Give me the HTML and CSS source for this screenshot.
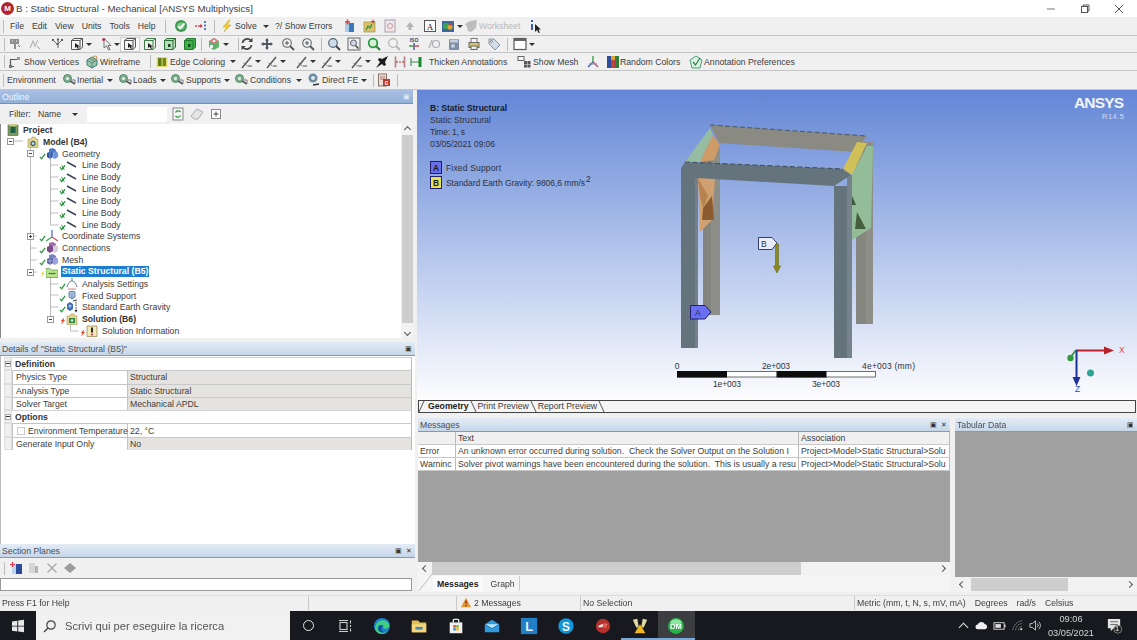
FILE: index.html
```html
<!DOCTYPE html>
<html lang="en">
<head>
<meta charset="utf-8">
<title>B : Static Structural - Mechanical [ANSYS Multiphysics]</title>
<link rel="stylesheet" href="styles.css">
</head>
<body>
<svg class="sprite" xmlns="http://www.w3.org/2000/svg">
  <symbol id="ok" viewBox="0 0 14 14"><circle cx="7" cy="7" r="6" fill="#3f9a52"/><circle cx="7" cy="7" r="3.6" fill="#7fc78b"/><path d="M4 7l2.2 2.4L10.5 4.4" fill="none" stroke="#fff" stroke-width="1.8"/></symbol>
  <symbol id="flow" viewBox="0 0 14 14"><path d="M1 7h7" stroke="#d2475a" stroke-width="1.4" stroke-dasharray="2 1"/><path d="M6 5l3 2-3 2z" fill="#d2475a"/><path d="M11 2v10" stroke="#3a62b8" stroke-width="1.6" stroke-dasharray="2 1.5"/></symbol>
  <symbol id="bolt" viewBox="0 0 14 14"><path d="M9 1L3 8h3.500L4 13l7-7H7.500L10 1z" fill="#f2cd2c" stroke="#c79f1e" stroke-width=".5"/></symbol>
  <symbol id="newbox" viewBox="0 0 14 14"><rect x="2" y="4" width="9" height="9" fill="#3d78b8"/><rect x="2" y="4" width="4" height="9" fill="#a7cce8"/><path d="M2 3h5M4.500 .5v5" stroke="#d8394a" stroke-width="1.400"/></symbol>
  <symbol id="chart" viewBox="0 0 14 14"><rect x="1" y="3" width="11" height="10" fill="#d6c36a" stroke="#96863a" stroke-width=".6"/><path d="M3 11l2-4 2 2 2-4" stroke="#3d8a46" stroke-width="1.300" fill="none"/><path d="M10 0.500v4M8 2.500h4" stroke="#d8394a" stroke-width="1"/></symbol>
  <symbol id="rep" viewBox="0 0 14 14"><rect x="2" y="1" width="10" height="12" fill="#f1e6ea" stroke="#a8a0b0"/><circle cx="7" cy="7" r="2.500" fill="none" stroke="#c797a8"/></symbol>
  <symbol id="spade" viewBox="0 0 14 14"><path d="M7 3l4 5H8.500v3h-3V8H3z" fill="#b4b4b4"/></symbol>
  <symbol id="abox" viewBox="0 0 14 14"><rect x="1.500" y="1.500" width="11" height="11" fill="#fafafa" stroke="#555"/><text x="7" y="10.500" text-anchor="middle" font-family="Liberation Serif" font-size="9" fill="#222">A</text></symbol>
  <symbol id="colorbox" viewBox="0 0 14 14"><rect x="1" y="2" width="12" height="11" fill="#3a6a9e"/><circle cx="5" cy="7" r="3" fill="#3da64e"/><circle cx="9" cy="8" r="2.500" fill="#e2a52f"/><circle cx="9" cy="5" r="1.500" fill="#c8413f"/></symbol>
  <symbol id="blob" viewBox="0 0 14 14"><path d="M1 5l5-3 7-1-1 8-5 4-3-1-1-4z" fill="#bdbdbd"/></symbol>
  <symbol id="infoc" viewBox="0 0 14 14"><path d="M3 1v2M3 5v6" stroke="#2a4fa8" stroke-width="1.800"/><path d="M6 5l0 8 2-2 1.500 3 1.300-.6L9.500 10.500H12z" fill="#222"/></symbol>
  <symbol id="face" viewBox="0 0 14 14"><path d="M2 2h9v5H8v5H6V7H2z" fill="#8d8d8d"/><path d="M4 4h1M8 4h1" stroke="#fff"/><path d="M10 8l2 2" stroke="#c8394a"/></symbol>
  <symbol id="sel2" viewBox="0 0 14 14"><path d="M2 11l3-7 2 5 3-6" stroke="#b5b5b5" stroke-width="1.200" fill="none"/><path d="M9 9l3 3" stroke="#c98a92"/></symbol>
  <symbol id="sel3" viewBox="0 0 14 14"><g fill="#555"><rect x="2" y="2" width="2" height="2"/><rect x="7" y="1.500" width="2" height="2"/><rect x="11" y="2" width="2" height="2"/><rect x="6.500" y="6" width="2" height="2"/></g><path d="M3 3l4 4M8 3v8M12 3L8 7" stroke="#666"/></symbol>
  <symbol id="cube0" viewBox="0 0 14 14"><path d="M1.500 3.500L4 1.500h8.500V10L10 12.500H1.500z" fill="#f4f4f4" stroke="#555"/><path d="M1.500 3.500H10v9M10 3.500l2.500-2" fill="none" stroke="#555"/><path d="M5 6l0 5 1.500-1.300L8 12l1-.5-1-2h2z" fill="#222"/></symbol>
  <symbol id="cube1" viewBox="0 0 14 14"><path d="M1.500 3.500L4 1.500h8.500V10L10 12.500H1.500z" fill="#eaf3ea" stroke="#3f7a48"/><path d="M1.500 3.500H10v9M10 3.500l2.500-2" fill="none" stroke="#3f7a48"/><path d="M5 6l0 5 1.500-1.300L8 12l1-.5-1-2h2z" fill="#222"/></symbol>
  <symbol id="cube2" viewBox="0 0 14 14"><path d="M1.500 3.500L4 1.500h8.500V10L10 12.500H1.500z" fill="#b9dcb9" stroke="#2c6e36"/><path d="M1.500 3.500H10v9M10 3.500l2.500-2" fill="none" stroke="#2c6e36"/><rect x="5" y="7" width="2.500" height="3" fill="#1b4822"/></symbol>
  <symbol id="cube3" viewBox="0 0 14 14"><path d="M1.500 3.500L4 1.500h8.500V10L10 12.500H1.500z" fill="#3fb24c" stroke="#1f7a2c"/><path d="M1.500 3.500H10v9" fill="none" stroke="#1f7a2c"/><rect x="5" y="7" width="2.500" height="3" fill="#12501c"/></symbol>
  <symbol id="cur" viewBox="0 0 14 14"><path d="M4 1l0 10 2.500-2.200L8.500 13l1.500-.7L8 8.500h3z" fill="#eee" stroke="#555" stroke-width=".8"/><circle cx="3.500" cy="2.500" r="1.500" fill="#c8394a"/></symbol>
  <symbol id="multi" viewBox="0 0 14 14"><path d="M7 1l5 3v6l-5 3-5-3V4z" fill="#5fb068"/><path d="M7 1l5 3-5 3-5-3z" fill="#e28a8a"/><circle cx="7" cy="4" r="2" fill="#f3f3f3" stroke="#c8394a" stroke-width=".7"/><rect x="3" y="8" width="3" height="3" fill="#eee"/></symbol>
  <symbol id="rot" viewBox="0 0 14 14"><path d="M11 3.500C8 .5 3 2 2.500 6M3 10.500C6 13.500 11 12 11.500 8" fill="none" stroke="#444" stroke-width="1.700"/><path d="M12.500 .8v4.200H8.300zM1.500 13.200V9h4.200z" fill="#444"/></symbol>
  <symbol id="pan" viewBox="0 0 14 14"><path d="M7 1l2 2.500H8V6h2.500V5L13 7l-2.500 2V8H8v2.500h1L7 13l-2-2.500h1V8H3.500v1L1 7l2.500-2v1H6V3.500H5z" fill="#556"/></symbol>
  <symbol id="zp" viewBox="0 0 14 14"><circle cx="6" cy="6" r="4.300" fill="#eef1f4" stroke="#666" stroke-width="1.100"/><path d="M9 9l4 4" stroke="#555" stroke-width="1.800"/><path d="M4 6h4M6 4v4" stroke="#555"/></symbol>
  <symbol id="zb" viewBox="0 0 14 14"><circle cx="6" cy="6" r="4.300" fill="#cbdbe8" stroke="#55687a" stroke-width="1.200"/><path d="M9 9l4 4" stroke="#444" stroke-width="2"/></symbol>
  <symbol id="zbox" viewBox="0 0 14 14"><rect x="1" y="1" width="12" height="12" fill="#eee" stroke="#666"/><circle cx="6.500" cy="6" r="3" fill="#cdd8e0" stroke="#667"/><path d="M8.500 8.500l3 3" stroke="#444" stroke-width="1.500"/></symbol>
  <symbol id="zg" viewBox="0 0 14 14"><circle cx="6" cy="6" r="4.300" fill="#d7efd6" stroke="#2c9a3e" stroke-width="1.800"/><path d="M9 9l4 4" stroke="#2a8a38" stroke-width="2.200"/></symbol>
  <symbol id="zgr" viewBox="0 0 14 14"><circle cx="6" cy="6" r="4.300" fill="#f2f2f2" stroke="#b4b4b4" stroke-width="1.200"/><path d="M9 9l4 4" stroke="#b4b4b4" stroke-width="1.800"/></symbol>
  <symbol id="iso" viewBox="0 0 14 14"><text x="7" y="5" text-anchor="middle" font-family="Liberation Sans" font-size="5" font-weight="700" fill="#445">ISO</text><path d="M7 6v7" stroke="#3a62b8" stroke-width="1.500"/><path d="M2 9h5" stroke="#3fa050" stroke-width="1.500"/><path d="M7 9h5" stroke="#d2475a" stroke-width="1.500"/></symbol>
  <symbol id="hist" viewBox="0 0 14 14"><path d="M2 11l3-8" stroke="#b8b8b8" stroke-width="1.500"/><circle cx="9" cy="7" r="3.500" fill="none" stroke="#aab" stroke-width="1.200"/></symbol>
  <symbol id="drive" viewBox="0 0 14 14"><rect x="2" y="2" width="10" height="11" rx="1" fill="#7e8ea6"/><rect x="3" y="2.500" width="8" height="3" fill="#c8d0dc"/><circle cx="6" cy="9" r="2" fill="#c3ccd8"/></symbol>
  <symbol id="prn" viewBox="0 0 14 14"><rect x="4" y="1.500" width="6" height="4" fill="#f8f8f8" stroke="#777"/><rect x="2" y="5.500" width="10" height="5" fill="#d8c468" stroke="#666"/><rect x="4" y="9" width="6" height="3.500" fill="#eee" stroke="#666"/></symbol>
  <symbol id="tag" viewBox="0 0 14 14"><path d="M2 2h5l6 6-5 5-6-6z" fill="#cfdce8" stroke="#8595a8"/><circle cx="4.500" cy="4.500" r="1" fill="#fff" stroke="#778"/></symbol>
  <symbol id="win" viewBox="0 0 14 14"><rect x="1" y="1.500" width="12" height="11" fill="#fff" stroke="#555" stroke-width="1.200"/><rect x="1" y="1.500" width="12" height="2.500" fill="#666"/></symbol>
  <symbol id="vert" viewBox="0 0 14 14"><path d="M2.500 11.500V4.500h7M2.500 11.500H6" fill="none" stroke="#555" stroke-width="1.200"/><rect x="9" y="2" width="3" height="3" fill="#999"/><rect x="1" y="10" width="3" height="3" fill="#777"/></symbol>
  <symbol id="wire" viewBox="0 0 14 14"><path d="M2 5l5-3 5 3v5l-5 3-5-3z" fill="#9ac8a0" stroke="#3b7a7e"/><path d="M2 5l5 3 5-3M7 8v5M4.500 3.500l5 3" fill="none" stroke="#3b6e8e" stroke-width=".7"/><circle cx="10" cy="3" r="2" fill="none" stroke="#c08b3c"/></symbol>
  <symbol id="edge" viewBox="0 0 14 14"><rect x="1.500" y="2" width="11" height="10" fill="#e6dd72"/><rect x="3" y="3" width="3.500" height="8" fill="#5f7a12"/><rect x="7.500" y="3" width="3.500" height="8" fill="#6f8a1c"/></symbol>
  <symbol id="beam" viewBox="0 0 14 14"><path d="M2 13L11 2" stroke="#555" stroke-width="1.400"/><path d="M3.500 8l4 3" stroke="#777"/><path d="M8 11h4" stroke="#888" stroke-width="1.500"/></symbol>
  <symbol id="pin" viewBox="0 0 14 14"><path d="M13 1L7 4 4 3 3 5l2 2-4 6 6-4 2 2 2-1-1-3z" fill="#1c1c1c"/></symbol>
  <symbol id="hr" viewBox="0 0 14 14"><path d="M2.500 1.500v11M11.500 1.500v11" stroke="#b87a88" stroke-width="1.600"/><path d="M3 7h8" stroke="#a33" stroke-dasharray="2 1"/></symbol>
  <symbol id="hg" viewBox="0 0 14 14"><path d="M2 3v8" stroke="#4d8a56" stroke-width="1.200"/><path d="M11 2v10" stroke="#188a2c" stroke-width="3"/><path d="M2 7h8" stroke="#3c8a4a"/></symbol>
  <symbol id="mesh" viewBox="0 0 14 14"><rect x="1" y="1.500" width="6" height="4" fill="#f5f5f5" stroke="#666"/><g fill="#555"><rect x="7" y="6" width="3" height="3"/><rect x="10.500" y="6" width="3" height="3"/><rect x="7" y="9.500" width="3" height="3"/><rect x="10.500" y="9.500" width="3" height="3"/></g></symbol>
  <symbol id="axes" viewBox="0 0 14 14"><path d="M7 7V1" stroke="#3aa04e" stroke-width="1.400"/><path d="M7 7l-5 5" stroke="#3a62b8" stroke-width="1.400"/><path d="M7 7l5 5" stroke="#d2475a" stroke-width="1.400"/><path d="M3 9h8" stroke="#7a8ab0"/></symbol>
  <symbol id="rand" viewBox="0 0 14 14"><rect x="1" y="1" width="4" height="12" fill="#2e4c9c"/><rect x="5" y="5" width="4" height="8" fill="#c04242"/><rect x="9" y="1" width="4" height="12" fill="#2e7e3c"/><rect x="5" y="1" width="4" height="4" fill="#d6a82e"/></symbol>
  <symbol id="annot" viewBox="0 0 14 14"><path d="M7 1l6 4-2 8H3L1 5z" fill="#dff0e4" stroke="#4b9a78"/><path d="M4 7l2.500 3L11 3" fill="none" stroke="#2d8a4c" stroke-width="1.300"/></symbol>
  <symbol id="load" viewBox="0 0 14 14"><circle cx="5.500" cy="5.500" r="4" fill="#7fae8f" stroke="#4a8a64"/><circle cx="5.500" cy="5.500" r="1.500" fill="#e8f2ea"/><path d="M8 8l5 3" stroke="#555" stroke-width="1.500"/><path d="M10 7h3v3" fill="none" stroke="#777"/></symbol>
  <symbol id="fe" viewBox="0 0 14 14"><circle cx="6" cy="5" r="4.500" fill="#6d8ca0"/><circle cx="6" cy="5" r="2" fill="#dfe8ee"/><path d="M6 12l6-1" stroke="#333" stroke-width="1.500"/></symbol>
  <symbol id="ctext" viewBox="0 0 14 14"><rect x="1.500" y="1" width="8" height="12" fill="#e9dfd8" stroke="#876"/><path d="M3 4h5M3 6h5" stroke="#b3726a"/><rect x="6" y="6" width="7" height="7" fill="#c4342c"/><text x="9.500" y="12" text-anchor="middle" font-family="Liberation Sans" font-size="6.500" font-weight="700" fill="#fff">c</text></symbol>
  <symbol id="refresh" viewBox="0 0 14 14"><rect x="2" y="1" width="10" height="12" fill="#f4f4f4" stroke="#888"/><path d="M9.500 5A3 3 0 0 0 4.500 5.500M4.500 9a3 3 0 0 0 5-.5" fill="none" stroke="#2f9a44" stroke-width="1.300"/></symbol>
  <symbol id="eraser" viewBox="0 0 14 14"><path d="M1 9l6-7 6 3-5 7H4z" fill="#e5e5e5" stroke="#aaa"/></symbol>
  <symbol id="plusb" viewBox="0 0 14 14"><rect x="2.500" y="2.500" width="9" height="9" fill="#fff" stroke="#888"/><path d="M4.500 7h5M7 4.500v5" stroke="#444"/></symbol>
  <symbol id="proj" viewBox="0 0 12 12"><rect x="1" y="1" width="10" height="10.500" fill="#7e9a5c" stroke="#525f3a" stroke-width=".6"/><rect x="3.500" y="3" width="5" height="6" fill="#1f5e46"/><rect x="2" y="0" width="8" height="2" fill="#cfc68a"/></symbol>
  <symbol id="model" viewBox="0 0 12 12"><path d="M1 3h3l1-2h3l1 2h2v8.500H1z" fill="#e4d48e" stroke="#9a8a4a" stroke-width=".5"/><path d="M3.500 6l2.500-1.500L8.500 6v3L6 10.500 3.500 9z" fill="#34657a"/><circle cx="6" cy="7.500" r="1.300" fill="#d2e4e8"/></symbol>
  <symbol id="geo" viewBox="0 0 12 12"><path d="M3 1l4-1 3 2v3L7 7 3 5z" fill="#4e78c4"/><path d="M1 5l3-1.500L7 5v4L4 11 1 9z" fill="#2e58a8"/><path d="M7 4l3-1 2 2v4l-3 2-2-1z" fill="#6e94d8"/><path d="M4 3.500V11M7 5v5" stroke="#c8d8f0" stroke-width=".5"/></symbol>
  <symbol id="conn" viewBox="0 0 12 12"><path d="M3 1l4-1 3 2v3L7 7 3 5z" fill="#9c6aa8"/><path d="M1 5l3-1.500L7 5v4L4 11 1 9z" fill="#7c4a88"/><path d="M7 4l3-1 2 2v4l-3 2-2-1z" fill="#d8cdd8"/></symbol>
  <symbol id="meshi" viewBox="0 0 12 12"><path d="M3 1l4-1 3 2v3L7 7 3 5z" fill="#7a82c0"/><path d="M1 5l3-1.500L7 5v4L4 11 1 9z" fill="#5a62a0"/><path d="M7 4l3-1 2 2v4l-3 2-2-1z" fill="#9aa2d8"/><path d="M4 3.500V11M1 7l6 0" stroke="#e0e4f8" stroke-width=".5"/></symbol>
  <symbol id="line" viewBox="0 0 12 12"><path d="M1 3l9 5" stroke="#3a4652" stroke-width="1.500"/></symbol>
  <symbol id="csi" viewBox="0 0 12 12"><path d="M6 7V0" stroke="#3a62b8" stroke-width="1.200"/><path d="M6 7l-6 4" stroke="#3aa04e" stroke-width="1.200"/><path d="M6 7l6 4" stroke="#d2475a" stroke-width="1.200"/></symbol>
  <symbol id="stat" viewBox="0 0 12 12"><path d="M0 2.500h4l1 1.500h7v7.500H0z" fill="#b6e38c" stroke="#5d9a46" stroke-width=".7"/><path d="M2.500 7.500h7" stroke="#3f7a2e" stroke-width="1.200"/></symbol>
  <symbol id="ana" viewBox="0 0 12 12"><path d="M1 9C3 1 9 1 11 9" fill="none" stroke="#3f5a72" stroke-width=".8"/><path d="M2 11h8" stroke="#c58a80"/><path d="M6 0v3" stroke="#48a" /></symbol>
  <symbol id="fix" viewBox="0 0 12 12"><path d="M3 2l3-1 3 1v5L6 9 3 7z" fill="#a8c8e0" stroke="#385a88" stroke-width=".7"/><path d="M6 3v6" stroke="#385a88" stroke-width=".5"/><path d="M7 11l4-1" stroke="#444" stroke-width="1.200"/></symbol>
  <symbol id="grv" viewBox="0 0 12 12"><path d="M1 3l3-2 3 2v5L4 10 1 8z" fill="#3e6eb8"/><circle cx="4" cy="5" r="1.500" fill="#a8c4e8"/><path d="M10 1v9" stroke="#333" stroke-dasharray="1.500 1"/><path d="M8.500 9h3L10 11.500z" fill="#222"/></symbol>
  <symbol id="sol" viewBox="0 0 12 12"><path d="M1 3h3l1-2h3l1 2h2v8.500H1z" fill="#e4d48e" stroke="#9a8a4a" stroke-width=".5"/><path d="M3 5h6v5H3z" fill="#2f8a44"/><circle cx="6" cy="7.500" r="1.300" fill="#d2e8d8"/></symbol>
  <symbol id="inf" viewBox="0 0 12 12"><path d="M1 1h10v10.500H1z" fill="#f4e9b6" stroke="#8a7a4a" stroke-width=".7"/><path d="M6 2.500v5" stroke="#111" stroke-width="1.800"/><circle cx="6" cy="9.500" r="1" fill="#c23"/></symbol>
  <symbol id="ck" viewBox="0 0 8 8"><path d="M1 5l2 2 4-5.500" fill="none" stroke="#2f9a44" stroke-width="1.500"/></symbol>
  <symbol id="ck2" viewBox="0 0 8 8"><path d="M1 4l2 3 4-5" fill="none" stroke="#2f9a44" stroke-width="1.400"/><path d="M3 2l3 5" stroke="#1c6a2c"/></symbol>
  <symbol id="zap" viewBox="0 0 8 8"><path d="M6 0L2 4h2L2 8l5-5H5z" fill="#ecdc3c"/></symbol>
  <symbol id="err" viewBox="0 0 8 8"><path d="M6 0L2 4h2L2 8l5-5H5z" fill="#e23a1c"/></symbol>
  <symbol id="newp" viewBox="0 0 14 14"><rect x="3" y="3" width="10" height="10" fill="#2a4a9a"/><rect x="3" y="3" width="4" height="10" fill="#bcd4ec"/><path d="M1 3.500h5M3.500 1v5" stroke="#d8394a" stroke-width="1.200"/></symbol>
  <symbol id="dup" viewBox="0 0 14 14"><rect x="2" y="2" width="6" height="10" fill="#d6d6d6"/><rect x="8" y="5" width="3" height="7" fill="#b4b4b4"/></symbol>
  <symbol id="xg" viewBox="0 0 14 14"><path d="M2.500 2.500l9 9M11.500 2.500l-9 9" stroke="#a8a8a8" stroke-width="1.300"/></symbol>
  <symbol id="dia" viewBox="0 0 14 14"><path d="M7 2l6 5-6 5-6-5z" fill="#9c9c9c"/></symbol>
  <symbol id="warn" viewBox="0 0 14 14"><path d="M7 1l6 11H1z" fill="#e39a3a"/><path d="M7 4v4" stroke="#a3261e" stroke-width="1.800"/><circle cx="7" cy="10" r="1" fill="#a3261e"/></symbol>
  <symbol id="wlogo" viewBox="0 0 14 14"><path d="M1 2.500l5.300-.8v5H1zM7.200 1.600L13 .8v5.900H7.200zM1 7.500h5.300v5L1 11.700zM7.200 7.500H13v5.700l-5.800-.8z" fill="#e8e8e8"/></symbol>
  <symbol id="mag" viewBox="0 0 14 14"><circle cx="8" cy="6" r="4.200" fill="none" stroke="#444" stroke-width="1.200"/><path d="M5 9l-4 4" stroke="#444" stroke-width="1.400"/></symbol>
  <symbol id="tview" viewBox="0 0 14 14"><rect x="2" y="3.500" width="7" height="7" fill="none" stroke="#ccc" stroke-width="1.100"/><path d="M1 1.500h9M1 12.500h9M12.500 1.500v3M12.500 6v2M12.500 9.500v3" stroke="#ccc" stroke-width="1.100"/></symbol>
  <symbol id="edgeb" viewBox="0 0 20 20"><circle cx="10" cy="10" r="9" fill="#1c7ed0"/><path d="M3 9C5 3 13 2 16.500 6 19 9 18 13 14 13c-3 0-3.500-1.500-2-3C9 7 4 9 5.500 14 7 18 12 18.500 16 16c-3 4-10 4-13-1-1-2-.8-4 0-6z" fill="#3fcf7e"/><path d="M11 10c-2-1.500-5-.5-5 2.500 0 3 3 5.500 8 4.500-3 .5-5-1.500-5-4 0-1.500 1-2.500 2-3z" fill="#0d4a8c"/></symbol>
  <symbol id="fold" viewBox="0 0 20 20"><path d="M2 4h7l2 2h7v11H2z" fill="#e5bd53"/><rect x="2" y="8" width="16" height="9" fill="#f4d77a"/><rect x="6" y="11" width="8" height="3" fill="#4a88b8"/></symbol>
  <symbol id="store" viewBox="0 0 20 20"><path d="M7 6V3.500C7 2 13 2 13 3.500V6" fill="none" stroke="#eee" stroke-width="1.500"/><rect x="3" y="6" width="14" height="12" fill="#f2f2f2"/><rect x="7" y="9" width="2.800" height="2.800" fill="#e2462c"/><rect x="10.300" y="9" width="2.800" height="2.800" fill="#71b72d"/><rect x="7" y="12.300" width="2.800" height="2.800" fill="#2b98dc"/><rect x="10.300" y="12.300" width="2.800" height="2.800" fill="#f0b51e"/></symbol>
  <symbol id="mail" viewBox="0 0 20 20"><path d="M2 8l8-5 8 5v9H2z" fill="#2f9ade"/><path d="M2 8l8 5 8-5" fill="#bfe2f6"/><path d="M2 8l8 5 8-5" fill="none" stroke="#0e6aa8"/></symbol>
  <symbol id="loff" viewBox="0 0 20 20"><rect x="1" y="1" width="18" height="18" fill="#1f80c8"/><text x="10" y="15.500" text-anchor="middle" font-family="Liberation Sans" font-size="14" font-weight="700" fill="#e8f4fc">L</text></symbol>
  <symbol id="skype" viewBox="0 0 20 20"><circle cx="10" cy="10" r="8.500" fill="#0f96dc"/><text x="10" y="15" text-anchor="middle" font-family="Liberation Sans" font-size="13.500" font-weight="700" fill="#fff">S</text></symbol>
  <symbol id="redb" viewBox="0 0 20 20"><circle cx="10" cy="10" r="8" fill="#b6302c"/><path d="M4 11c3-3 7-4 11-3-2 3-6 4-11 3z" fill="#f3e2e0"/><circle cx="12" cy="10" r="2.500" fill="#e4564a"/></symbol>
  <symbol id="ant" viewBox="0 0 20 20"><path d="M2 3l5-1 1.500 9L6 12z" fill="#e4d8a4"/><path d="M18 3l-5-1-1.500 9 2.500 1z" fill="#e4d8a4"/><path d="M10 8l6 10H4z" fill="#f0b81e"/></symbol>
  <symbol id="dm" viewBox="0 0 20 20"><circle cx="10" cy="10" r="8.800" fill="#27b54a"/><ellipse cx="10" cy="6" rx="6" ry="3.500" fill="#8fe6a2"/><text x="10" y="13.500" text-anchor="middle" font-family="Liberation Sans" font-size="8.500" font-weight="700" fill="#fff">DM</text></symbol>
  <symbol id="cloud" viewBox="0 0 14 14"><path d="M3 11a2.500 2.500 0 0 1 0-5 4 4 0 0 1 7.500-.5A2.800 2.800 0 0 1 11 11z" fill="#eee"/></symbol>
  <symbol id="batt" viewBox="0 0 14 14"><rect x="1" y="4" width="11" height="7" fill="#111" stroke="#ddd"/><rect x="2.500" y="5.500" width="6" height="4" fill="#ddd"/><rect x="12" y="6" width="1.500" height="3" fill="#ddd"/></symbol>
  <symbol id="wifi" viewBox="0 0 14 14"><path d="M2 12a11 11 0 0 1 10-10M5 12a7 7 0 0 1 7-7M8 12a4 4 0 0 1 4-4" fill="none" stroke="#9a9a9a" stroke-dasharray="1.300 .7"/><circle cx="11" cy="11" r="1.200" fill="#ccc"/></symbol>
  <symbol id="vol" viewBox="0 0 14 14"><path d="M1 5h2.500L7 2v10L3.500 9H1z" fill="none" stroke="#ccc"/><path d="M9 5a3 3 0 0 1 0 4M10.500 3a6 6 0 0 1 0 8" fill="none" stroke="#ccc"/></symbol>
  <symbol id="note" viewBox="0 0 18 18"><path d="M2 2h13v10H8l-3 3v-3H2z" fill="#e4e4e4"/><path d="M4.500 5h8M4.500 8h8" stroke="#666"/><circle cx="12.500" cy="13" r="4.200" fill="#222" stroke="#aaa" stroke-width=".7"/></symbol>
</svg>

<div class="app">
  <header class="titlebar">
    <span class="mlogo">M</span>
    <span class="wintitle">B : Static Structural - Mechanical [ANSYS Multiphysics]</span>
    <span class="winbtns">
      <span class="wb"><svg viewBox="0 0 10 10"><path d="M1 5h8" stroke="#777"/></svg></span>
      <span class="wb"><svg viewBox="0 0 10 10"><rect x="1.500" y="2.500" width="6" height="6" fill="none" stroke="#555"/><path d="M3 2.500V1h6v6H7.500" fill="none" stroke="#555"/></svg></span>
      <span class="wb"><svg viewBox="0 0 10 10"><path d="M1 1l8 8M9 1l-8 8" stroke="#555"/></svg></span>
    </span>
  </header>

  <div class="tb tb1">
    <i class="sep s2"></i>
    <nav class="menu"><span>File</span><span>Edit</span><span>View</span><span>Units</span><span>Tools</span><span>Help</span></nav>
    <i class="sep"></i><b class="g5"></b>
    <span class="slot"><svg class="ic"><use href="#ok"/></svg></span>
    <span class="slot"><svg class="ic"><use href="#flow"/></svg></span>
    <b class="g3"></b><i class="sep"></i><b class="g5"></b>
    <svg class="ic"><use href="#bolt"/></svg><b class="g1"></b><span class="w30">Solve</span><i class="arr"></i><b class="g6"></b>
    <span class="w65">?/ Show Errors</span>
    <span class="slot"><svg class="ic"><use href="#newbox"/></svg></span>
    <span class="slot"><svg class="ic"><use href="#chart"/></svg></span>
    <span class="slot"><svg class="ic"><use href="#rep"/></svg></span>
    <span class="slot"><svg class="ic"><use href="#spade"/></svg></span>
    <span class="slot"><svg class="ic"><use href="#abox"/></svg></span>
    <span class="slot16"><svg class="ic"><use href="#colorbox"/></svg></span><i class="arr"></i><b class="g1"></b>
    <svg class="ic"><use href="#blob"/></svg><b class="g1"></b><span class="w50 dim">Worksheet</span>
    <svg class="ic"><use href="#infoc"/></svg>
  </div>

  <div class="tb tb2">
    <i class="sep"></i>
    <span class="slot"><svg class="ic"><use href="#face"/></svg></span>
    <span class="slot"><svg class="ic"><use href="#sel2"/></svg></span><b class="g2"></b>
    <span class="slot"><svg class="ic"><use href="#sel3"/></svg></span>
    <span class="slot"><svg class="ic"><use href="#cube0"/></svg></span><i class="arr tight"></i><b class="g7"></b>
    <span class="slot16"><svg class="ic"><use href="#cur"/></svg></span><i class="arr tight"></i>
    <span class="slot pressed"><svg class="ic"><use href="#cube0"/></svg></span>
    <span class="slot"><svg class="ic"><use href="#cube1"/></svg></span>
    <span class="slot"><svg class="ic"><use href="#cube2"/></svg></span>
    <span class="slot"><svg class="ic"><use href="#cube3"/></svg></span>
    <b class="g1"></b><i class="sep"></i><b class="g2"></b>
    <span class="slot"><svg class="ic"><use href="#multi"/></svg></span><i class="arr tight"></i><b class="g9"></b>
    <i class="sep"></i>
    <span class="slot16"><svg class="ic"><use href="#rot"/></svg></span><b class="g4"></b>
    <span class="slot16"><svg class="ic"><use href="#pan"/></svg></span><b class="g5"></b>
    <span class="slot16"><svg class="ic"><use href="#zp"/></svg></span><b class="g4"></b>
    <span class="slot16"><svg class="ic"><use href="#zp"/></svg></span><b class="g5"></b>
    <i class="sep"></i><b class="g2"></b>
    <span class="slot"><svg class="ic"><use href="#zb"/></svg></span>
    <span class="slot"><svg class="ic"><use href="#zbox"/></svg></span>
    <span class="slot"><svg class="ic"><use href="#zg"/></svg></span>
    <span class="slot"><svg class="ic"><use href="#zgr"/></svg></span>
    <span class="slot"><svg class="ic"><use href="#iso"/></svg></span>
    <span class="slot"><svg class="ic"><use href="#hist"/></svg></span>
    <span class="slot"><svg class="ic"><use href="#drive"/></svg></span>
    <span class="slot"><svg class="ic"><use href="#prn"/></svg></span>
    <span class="slot"><svg class="ic"><use href="#tag"/></svg></span>
    <b class="g3"></b><i class="sep"></i><b class="g2"></b>
    <span class="slot"><svg class="ic"><use href="#win"/></svg></span><i class="arr tight"></i>
  </div>

  <div class="tb tb3">
    <i class="sep"></i><b class="g3"></b>
    <svg class="ic"><use href="#vert"/></svg><b class="g2"></b><span class="w53">Show Vertices</span><b class="g8"></b>
    <svg class="ic"><use href="#wire"/></svg><b class="g1"></b><span class="w41">Wireframe</span><b class="g9"></b>
    <i class="sep"></i><b class="g4"></b>
    <svg class="ic"><use href="#edge"/></svg><b class="g1"></b><span class="w55">Edge Coloring</span><b class="g4"></b><i class="arr"></i><b class="g4"></b>
    <svg class="ic"><use href="#beam"/></svg><i class="arr"></i><b class="g4"></b>
    <svg class="ic"><use href="#beam"/></svg><i class="arr"></i><b class="g9"></b>
    <svg class="ic"><use href="#beam"/></svg><i class="arr"></i><b class="g4"></b>
    <svg class="ic"><use href="#beam"/></svg><i class="arr"></i><b class="g9"></b>
    <svg class="ic"><use href="#beam"/></svg><i class="arr"></i><b class="g4"></b>
    <svg class="ic"><use href="#pin"/></svg><b class="g4"></b>
    <svg class="ic"><use href="#hr"/></svg><b class="g2"></b>
    <svg class="ic"><use href="#hg"/></svg><b class="g6"></b>
    <span class="w81">Thicken Annotations</span><b class="g7"></b>
    <svg class="ic"><use href="#mesh"/></svg><b class="g2"></b><span class="w45">Show Mesh</span><b class="g8"></b>
    <svg class="ic"><use href="#axes"/></svg><b class="g6"></b>
    <svg class="ic"><use href="#rand"/></svg><span class="w61">Random Colors</span><b class="g8"></b>
    <svg class="ic"><use href="#annot"/></svg><b class="g1"></b><span>Annotation Preferences</span>
  </div>

  <div class="tb tb4">
    <i class="sep"></i><b class="g3"></b>
    <span class="w50">Environment</span><b class="g5"></b>
    <svg class="ic"><use href="#load"/></svg><b class="g1"></b><span class="w26">Inertial</span><b class="g3"></b><i class="arr"></i><b class="g5"></b>
    <svg class="ic"><use href="#load"/></svg><b class="g1"></b><span class="w23">Loads</span><b class="g3"></b><i class="arr"></i><b class="g4"></b>
    <svg class="ic"><use href="#load"/></svg><b class="g2"></b><span class="w34">Supports</span><b class="g3"></b><i class="arr"></i><b class="g4"></b>
    <svg class="ic"><use href="#load"/></svg><b class="g2"></b><span class="w42">Conditions</span><b class="g3"></b><i class="arr"></i><b class="g5"></b>
    <svg class="ic"><use href="#fe"/></svg><b class="g1"></b><span class="w35">Direct FE</span><b class="g3"></b><i class="arr"></i><b class="g6"></b>
    <i class="sep"></i><b class="g3"></b>
    <svg class="ic"><use href="#ctext"/></svg><b class="g6"></b>
    <i class="sep"></i>
  </div>

  <main class="main">
    <section class="left">
      <div class="phead blue"><span>Outline</span><span class="pinw">&#9635;</span></div>
      <div class="filter">
        <span class="flabel">Filter:</span>
        <span class="fname">Name</span><i class="arr"></i>
        <span class="finput"></span>
        <svg class="ic"><use href="#refresh"/></svg>
        <svg class="ic"><use href="#eraser"/></svg>
        <svg class="ic"><use href="#plusb"/></svg>
      </div>
      <div class="treewrap">
        <div class="tree">
          <svg class="connectors" width="120" height="214" viewBox="0 124 120 214">
            <path d="M30.500 147v125M50.500 159v66M50.500 278v42M70.500 325v6M50.500 165h8M50.500 177h8M50.500 189h8M50.500 201h8M50.500 213h8M50.500 225h8M30.500 236h6M30.500 248h6M30.500 260h6M30.500 272h6M50.500 284h8M50.500 295h8M50.500 307h8M70.500 331h8M14 141h9" fill="none" stroke="#bdbdbd"/>
            <g fill="#fff" stroke="#999"><rect x="7.500" y="138.500" width="6" height="6"/><rect x="27.500" y="150.500" width="6" height="6"/><rect x="27.500" y="233.500" width="6" height="6"/><rect x="27.500" y="269.500" width="6" height="6"/><rect x="47.500" y="316.500" width="6" height="6"/></g>
            <path d="M9 141.500h3M29 153.500h3M29 236.500h3M30.500 235v3M29 272.500h3M49 319.500h3" stroke="#444"/>
          </svg>
          <div class="row l0"><svg class="ti"><use href="#proj"/></svg><b>Project</b></div>
          <div class="row l1"><svg class="ti"><use href="#model"/></svg><b>Model (B4)</b></div>
          <div class="row l2"><svg class="st"><use href="#ck"/></svg><svg class="ti"><use href="#geo"/></svg><span>Geometry</span></div>
          <div class="row l3"><svg class="st"><use href="#ck2"/></svg><svg class="ti"><use href="#line"/></svg><span>Line Body</span></div>
          <div class="row l3"><svg class="st"><use href="#ck2"/></svg><svg class="ti"><use href="#line"/></svg><span>Line Body</span></div>
          <div class="row l3"><svg class="st"><use href="#ck2"/></svg><svg class="ti"><use href="#line"/></svg><span>Line Body</span></div>
          <div class="row l3"><svg class="st"><use href="#ck2"/></svg><svg class="ti"><use href="#line"/></svg><span>Line Body</span></div>
          <div class="row l3"><svg class="st"><use href="#ck2"/></svg><svg class="ti"><use href="#line"/></svg><span>Line Body</span></div>
          <div class="row l3"><svg class="st"><use href="#ck2"/></svg><svg class="ti"><use href="#line"/></svg><span>Line Body</span></div>
          <div class="row l2"><svg class="st"><use href="#ck"/></svg><svg class="ti"><use href="#csi"/></svg><span>Coordinate Systems</span></div>
          <div class="row l2"><svg class="st"><use href="#ck"/></svg><svg class="ti"><use href="#conn"/></svg><span>Connections</span></div>
          <div class="row l2"><svg class="st"><use href="#ck"/></svg><svg class="ti"><use href="#meshi"/></svg><span>Mesh</span></div>
          <div class="row l2"><svg class="st"><use href="#zap"/></svg><svg class="ti"><use href="#stat"/></svg><b class="selected">Static Structural (B5)</b></div>
          <div class="row l3"><svg class="st"><use href="#ck"/></svg><svg class="ti"><use href="#ana"/></svg><span>Analysis Settings</span></div>
          <div class="row l3"><svg class="st"><use href="#ck"/></svg><svg class="ti"><use href="#fix"/></svg><span>Fixed Support</span></div>
          <div class="row l3"><svg class="st"><use href="#ck"/></svg><svg class="ti"><use href="#grv"/></svg><span>Standard Earth Gravity</span></div>
          <div class="row l3"><svg class="st"><use href="#err"/></svg><svg class="ti"><use href="#sol"/></svg><b>Solution (B6)</b></div>
          <div class="row l4"><svg class="st"><use href="#err"/></svg><svg class="ti"><use href="#inf"/></svg><span>Solution Information</span></div>
        </div>
        <div class="vscroll"><span class="chev up"></span><span class="vthumb"></span><span class="chev down"></span></div>
      </div>

      <div class="phead light details-head"><span>Details of "Static Structural (B5)"</span><span class="pins">&#9635;</span></div>
      <div class="details">
        <div class="drow group"><span class="gut"><i class="minus"></i></span><span class="gt">Definition</span></div>
        <div class="drow"><span class="gut"></span><span class="dk">Physics Type</span><span class="dv">Structural</span></div>
        <div class="drow"><span class="gut"></span><span class="dk">Analysis Type</span><span class="dv">Static Structural</span></div>
        <div class="drow"><span class="gut"></span><span class="dk">Solver Target</span><span class="dv">Mechanical APDL</span></div>
        <div class="drow group"><span class="gut"><i class="minus"></i></span><span class="gt">Options</span></div>
        <div class="drow"><span class="gut"></span><span class="dk chk"><i class="checkbox"></i>Environment Temperature</span><span class="dv white">22, °C</span></div>
        <div class="drow"><span class="gut"></span><span class="dk">Generate Input Only</span><span class="dv">No</span></div>
      </div>

      <div class="phead light"><span>Section Planes</span><span class="pins">&#9635;&nbsp;&nbsp;&#10005;</span></div>
      <div class="sectool">
        <i class="sep"></i><b class="g3"></b>
        <span class="slot16"><svg class="ic"><use href="#newp"/></svg></span><b class="g2"></b>
        <span class="slot16"><svg class="ic"><use href="#dup"/></svg></span><b class="g2"></b>
        <span class="slot16"><svg class="ic"><use href="#xg"/></svg></span><b class="g2"></b>
        <span class="slot16"><svg class="ic"><use href="#dia"/></svg></span>
      </div>
      <div class="secinput"></div>
    </section>

    <section class="right">
      <div class="viewport">
        <svg class="scene" viewBox="417 90 720 310" width="720" height="310" font-family="Liberation Sans, sans-serif">
          <defs>
            <linearGradient id="vpsky" x1="0" y1="0" x2="0" y2="1"><stop offset="0" stop-color="#6486d6"/><stop offset=".35" stop-color="#98b0e4"/><stop offset=".7" stop-color="#cfdaf3"/><stop offset="1" stop-color="#fdfdfe"/></linearGradient>
          </defs>
          <rect x="417" y="90" width="720" height="310" fill="url(#vpsky)"/>
          <!-- back legs -->
          <rect x="703" y="143" width="17" height="172" fill="#83847f"/>
          <rect x="711" y="143" width="9" height="172" fill="#8e8e88"/>
          <rect x="856" y="142" width="17" height="182" fill="#858680"/>
          <rect x="866" y="142" width="7" height="182" fill="#8e8e88"/>
          <!-- back beam -->
          <path d="M710 125L867 136L855 152L719 143Z" fill="#8a8a82"/>
          <path d="M710 125L867 136" stroke="#50606a" stroke-width="1.200" stroke-dasharray="5 2.500" fill="none"/>
          <!-- gussets -->
          <path d="M710 128L713 135L700 162L685 162Z" fill="#96bca2"/>
          <path d="M713 135L720 145L714 160L700 162Z" fill="#cf9c66"/>
          <path d="M698 178L715 178L712 220L700 232Z" fill="#d0a070"/>
          <path d="M698 178L708 196L703 208L700 196Z" fill="#b68350"/>
          <path d="M703 208L712 196L714 220L702 220Z" fill="#8a5c30"/>
          <path d="M857 142L867 143L852 175L843 169Z" fill="#d0c05a"/>
          <path d="M867 146L873 146L871 228L852 240L852 175Z" fill="#93bd98"/>
          <path d="M852 196L856 205L852 205Z" fill="#3b5a3a"/>
          <path d="M857 212L866 229L855 229Z" fill="#445e3e"/>
          <!-- front legs -->
          <rect x="681" y="168" width="16" height="180" fill="#64737c"/>
          <rect x="695" y="178" width="3" height="170" fill="#74808a"/>
          <rect x="834" y="186" width="14" height="172" fill="#64737c"/>
          <rect x="847" y="175" width="5" height="183" fill="#77838c"/>
          <!-- front beam -->
          <path d="M681 168L685 162L843 169L851 175L834 186L697 178Z" fill="#64737c"/>
          <path d="M685 162L843 169" stroke="#445660" stroke-width="1.200" stroke-dasharray="5 2.500" fill="none"/>
          <!-- legend -->
          <text class="vt bold" x="430" y="110.500" textLength="77">B: Static Structural</text>
          <text class="vt" x="430" y="122.500" textLength="61">Static Structural</text>
          <text class="vt" x="430" y="134.500" textLength="35">Time: 1, s</text>
          <text class="vt" x="430" y="146.500" textLength="65">03/05/2021 09:06</text>
          <rect x="430.500" y="161.500" width="11" height="12" fill="#6a6ee8" stroke="#20206a"/>
          <text class="vt bold" x="436" y="171" text-anchor="middle">A</text>
          <text class="vt" x="446" y="170.500" textLength="55">Fixed Support</text>
          <rect x="430.500" y="176.500" width="11" height="12" fill="#e8e24c" stroke="#20206a"/>
          <text class="vt bold" x="436" y="186" text-anchor="middle">B</text>
          <text class="vt" x="446" y="185.500" textLength="139">Standard Earth Gravity: 9806,6 mm/s</text>
          <text class="vt" x="586" y="182" font-size="6.500">2</text>
          <!-- ansys -->
          <text x="1074" y="108" font-size="15.500" font-weight="700" fill="#f2f5fb" textLength="50">ANSYS</text>
          <text x="1102" y="119" font-size="7.500" fill="#d4dff4" textLength="22">R14.5</text>
          <!-- callouts -->
          <path d="M690.500 305.500H705L711 312L705 319H690.500Z" fill="#6a6ef0" stroke="#20206a"/>
          <text class="vt" x="695" y="315.500" textLength="6">A</text>
          <path d="M758.500 237.500H772L777 243L772 249.500H758.500Z" fill="#e9edf9" stroke="#30406a"/>
          <text class="vt" x="761" y="246.500">B</text>
          <path d="M775.500 244h3v22h2.200l-3.700 7-3.700-7h2.200z" fill="#8b8a20" stroke="#5c5a10" stroke-width=".5"/>
          <!-- ruler -->
          <text class="vt" x="677" y="368.500" text-anchor="middle">0</text>
          <text class="vt" x="776" y="368.500" text-anchor="middle" textLength="28">2e+003</text>
          <text class="vt" x="862" y="368.500" textLength="53">4e+003 (mm)</text>
          <text class="vt" x="727" y="386.500" text-anchor="middle" textLength="28">1e+003</text>
          <text class="vt" x="826" y="386.500" text-anchor="middle" textLength="28">3e+003</text>
          <rect x="677.500" y="371.500" width="198" height="5.500" fill="#fff" stroke="#333" stroke-width=".7"/>
          <rect x="677" y="371" width="50" height="6.500" fill="#0c0c0c"/>
          <rect x="776.500" y="371" width="50" height="6.500" fill="#0c0c0c"/>
          <!-- triad -->
          <path d="M1076 350.500H1105" stroke="#b8202a" stroke-width="2"/>
          <path d="M1104 346.500l10 4-10 4z" fill="#b8202a"/>
          <text x="1119" y="352.500" font-size="8.500" fill="#d84550">X</text>
          <path d="M1076.500 350V378" stroke="#1c2f9a" stroke-width="2"/>
          <path d="M1072.500 377l4 9 4-9z" fill="#1c2f9a"/>
          <text x="1075" y="392" font-size="8.500" fill="#3a4aa8">Z</text>
          <path d="M1076 350l-6 8" stroke="#2c8a3a" stroke-width="1.500"/>
          <circle cx="1070.500" cy="358" r="3.200" fill="#2f9a3e"/>
          <circle cx="1090.500" cy="373" r="3.500" fill="#2fa596"/>
        </svg>
      </div>
      <div class="vtabs">
        <span class="vtab on">Geometry</span><span class="vtab">Print Preview</span><span class="vtab">Report Preview</span>
      </div>
      <div class="bottom">
        <div class="messages">
          <div class="phead light"><span>Messages</span><span class="pins">&#9635;&nbsp;&nbsp;&#10005;</span></div>
          <div class="grid">
            <div class="mrow mh"><span></span><span>Text</span><span>Association</span></div>
            <div class="mrow"><span>Error</span><span>An unknown error occurred during solution.  Check the Solver Output on the Solution I</span><span>Project&gt;Model&gt;Static Structural&gt;Solu</span></div>
            <div class="mrow"><span>Warninc</span><span>Solver pivot warnings have been encountered during the solution.  This is usually a resu</span><span>Project&gt;Model&gt;Static Structural&gt;Solu</span></div>
          </div>
          <div class="hscroll m"><span class="chev lft"></span><span class="hthumb mt"></span><span class="chev rgt"></span></div>
          <div class="mtabs"><span class="mtab on">Messages</span><span class="mtab">Graph</span></div>
        </div>
        <div class="tabular">
          <div class="phead light"><span>Tabular Data</span><span class="pins">&#9635;</span></div>
          <div class="tgrid"></div>
          <div class="hscroll t"><span class="chev lft"></span><span class="hthumb tt"></span><span class="chev rgt"></span></div>
        </div>
      </div>
    </section>
  </main>

  <footer class="status">
    <span class="sc c1">Press F1 for Help</span>
    <span class="sc c2"></span>
    <span class="sc c3"><svg class="ic"><use href="#warn"/></svg>2 Messages</span>
    <span class="sc c4">No Selection</span>
    <span class="sc c5"><span>Metric (mm, t, N, s, mV, mA)</span><span>Degrees</span><span>rad/s</span><span>Celsius</span></span>
  </footer>

  <div class="taskbar">
    <span class="start"><svg class="tw"><use href="#wlogo"/></svg></span>
    <span class="search"><svg class="tw"><use href="#mag"/></svg><span>Scrivi qui per eseguire la ricerca</span></span>
    <span class="tk cortana"><i class="ring"></i></span>
    <span class="tk"><svg class="tw"><use href="#tview"/></svg></span>
    <span class="tk"><svg class="tb-ic"><use href="#edgeb"/></svg></span>
    <span class="tk"><svg class="tb-ic"><use href="#fold"/></svg></span>
    <span class="tk"><svg class="tb-ic"><use href="#store"/></svg></span>
    <span class="tk"><svg class="tb-ic"><use href="#mail"/></svg></span>
    <span class="tk"><svg class="tb-ic"><use href="#loff"/></svg></span>
    <span class="tk"><svg class="tb-ic"><use href="#skype"/></svg></span>
    <span class="tk"><svg class="tb-ic"><use href="#redb"/></svg></span>
    <span class="tk run"><svg class="tb-ic"><use href="#ant"/></svg></span>
    <span class="tk run active"><svg class="tb-ic"><use href="#dm"/></svg></span>
    <span class="tray">
      <i class="caret"></i>
      <svg class="tr"><use href="#cloud"/></svg>
      <svg class="tr"><use href="#batt"/></svg>
      <svg class="tr"><use href="#wifi"/></svg>
      <svg class="tr"><use href="#vol"/></svg>
      <span class="clock"><span>09:06</span><span>03/05/2021</span></span>
      <span class="notif"><svg class="nt"><use href="#note"/></svg><em>1</em></span>
    </span>
  </div>
</div>
</body>
</html>
```

FILE: styles.css
```css
* { box-sizing: border-box; }
html, body { margin: 0; padding: 0; }
body {
  width: 1137px;
  height: 640px;
  overflow: hidden;
  background: #f0f0f0;
  font-family: "Liberation Sans", sans-serif;
  font-size: 8.700px;
  color: #3c3c3c;
}
.sprite { display: none; }
.app { width: 1137px; height: 640px; display: flex; flex-direction: column; filter: blur(.35px); }

/* title bar */
.titlebar { height: 17px; background: #fff; display: flex; align-items: center; padding-left: 1px; color: #444; }
.mlogo { width: 13px; height: 13px; border-radius: 50%; background: #b4242c; color: #fff; font: 700 8px "Liberation Sans", sans-serif; display: flex; align-items: center; justify-content: center; margin-right: 2px; }
.wintitle { font-size: 9.700px; }
.winbtns { margin-left: auto; display: flex; padding-right: 1px; }
.wb { width: 34px; display: flex; justify-content: center; }
.wb svg { width: 10px; height: 10px; }

/* toolbars */
.tb { display: flex; align-items: center; background: #f0f0f0; border-bottom: 1px solid #c4c4c4; white-space: nowrap; }
.tb > * { flex: none; }
.tb1 { height: 19px; padding-left: 3px; }
.tb2 { height: 17px; padding-left: 4px; }
.tb3 { height: 18px; padding-left: 4px; }
.tb4 { height: 18px; padding-left: 3px; border-bottom: 0; }
.menu { display: flex; width: 161px; padding-left: 6px; gap: 8px; }
.sep { width: 1px; height: 13px; background: #bcbcbc; display: block; flex: none; }
.ic { width: 14px; height: 14px; display: block; flex: none; }
.slot { width: 20px; display: flex; justify-content: center; align-items: center; flex: none; height: 15px; }
.slot16 { width: 16px; display: flex; justify-content: center; align-items: center; flex: none; }
.pressed { background: #fbfbfb; outline: 1px solid #cfcfcf; outline-offset: -1px; }
.arr { display: block; flex: none; width: 7px; height: 3px; }
.arr::before { content: ""; display: block; width: 0; height: 0; margin: 0 auto; border-left: 3px solid transparent; border-right: 3px solid transparent; border-top: 3.500px solid #333; }
.arr.tight { margin-left: -2px; }
.dim { color: #b8b8b8; }
.g1 { width: 1px; } .g2 { width: 2px; } .g3 { width: 3px; } .g4 { width: 4px; } .g5 { width: 5px; }
.g6 { width: 6px; } .g7 { width: 7px; } .g8 { width: 8px; } .g9 { width: 9px; }
.w23 { width: 23px; } .w26 { width: 26px; } .w30 { width: 27px; } .w34 { width: 34px; } .w35 { width: 35px; }
.w41 { width: 41px; } .w42 { width: 42px; } .w45 { width: 45px; } .w50 { width: 50px; } .w53 { width: 53px; }
.w55 { width: 55px; } .w61 { width: 61px; } .w65 { width: 65px; } .w81 { width: 81px; }

/* main */
.main { height: 506px; display: flex; background: #f0f0f0; border-top: 1px solid #b8c6dc; }
.left { width: 415px; flex: none; display: flex; flex-direction: column; }
.right { width: 720px; margin-left: 2px; flex: none; display: flex; flex-direction: column; }
.phead { height: 14px; display: flex; align-items: center; justify-content: space-between; padding: 0 3px 0 2px; flex: none; }
.phead.blue { background: linear-gradient(#a9c0e2, #93b0d8); color: #f2f6fb; width: 413px; border-bottom: 1px solid #7d8ea6; }
.phead.light { background: linear-gradient(#e3ecf6, #c6d6e8); color: #4a5058; border-bottom: 1px solid #8e98a4; }
.pinw { color: #dfe8f4; font-size: 7px; }
.pins { color: #333; font-size: 7px; }

/* outline */
.filter { height: 20px; display: flex; align-items: center; padding-left: 9px; width: 413px; }
.flabel { width: 29px; }
.fname { width: 33px; }
.finput { width: 80px; height: 15px; background: #fff; margin: 0 2px 0 5px; padding: 0; }
.filter .arr { margin-right: 4px; }
.filter .ic { margin: 0 3px 0 2px; }
.treewrap { height: 214px; width: 413px; display: flex; background: #fff; border-left: 1px solid #888; flex: none; }
.tree { flex: 1; position: relative; }
.connectors { position: absolute; left: -1px; top: 0; }
.row { height: 11.830px; display: flex; align-items: center; white-space: nowrap; position: relative; }
.ti { width: 12px; height: 12px; flex: none; margin-right: 4px; }
.st { width: 7px; height: 8px; flex: none; margin-top: 4px; }
.row.l0 { padding-left: 6px; }
.row.l1 { padding-left: 26px; }
.row.l2 { padding-left: 38px; }
.row.l3 { padding-left: 58px; }
.row.l4 { padding-left: 78px; }
.row b { font-weight: 700; color: #333; }
.selected { background: #1f7dd0; color: #fff !important; padding: 0 1px; margin-left: -1px; line-height: 11px; }
.vscroll { width: 12px; display: flex; flex-direction: column; align-items: center; background: #f2f2f2; padding: 3px 0; }
.vthumb { width: 11px; flex: 1; background: #cdcdcd; margin: 3px 0 7px; }
.chev { display: block; width: 5px; height: 5px; border-left: 1.300px solid #555; border-top: 1.300px solid #555; flex: none; }
.chev.up { transform: rotate(45deg); }
.chev.down { transform: rotate(225deg); }
.chev.lft { transform: rotate(-45deg); }
.chev.rgt { transform: rotate(135deg); }

/* details */
.details-head { margin-top: 4px; }
.details { height: 188px; background: #fff; padding: 1px 3px 0; flex: none; border-left: 1px solid #bbb; }
.drow { height: 13.300px; display: grid; grid-template-columns: 8px 116px 1fr; align-items: stretch; white-space: nowrap; }
.gut { background: #f0f0ee; border: 1px solid #ddd; display: flex; align-items: center; justify-content: center; }
.minus { width: 6px; height: 6px; border: 1px solid #aaa; background: #fff; position: relative; display: block; }
.minus::after { content: ""; position: absolute; left: 0; right: 0; top: 1.500px; height: 1px; background: #333; }
.gt { grid-column: 2 / 4; font-weight: 700; padding-left: 3px; display: flex; align-items: center; color: #333; border-top: 1px solid #d4d4d4; border-right: 1px solid #bbb; }
.dk { padding-left: 3px; display: flex; align-items: center; border: 1px solid #c4c4c4; border-width: 1px 1px 0 1px; background: #fff; }
.dv { padding-left: 2px; display: flex; align-items: center; background: #e5e3df; border-top: 1px solid #c9c9c9; border-right: 1px solid #bbb; }
.dv.white { background: #fff; }
.chk { padding-left: 4px; }
.checkbox { width: 8px; height: 8px; border: 1px solid #ccc; background: #fff; display: block; margin-right: 3px; flex: none; }
.sectool { height: 20px; display: flex; align-items: center; padding-left: 4px; }
.secinput { height: 13px; width: 412px; background: #fff; border: 1px solid #999; }

/* viewport */
.viewport { height: 310px; flex: none; }
.scene { display: block; }
.vt { font-size: 8.500px; fill: #2d3240; }
.vt.bold { font-weight: 700; fill: #141a2c; }
.vtabs { height: 13px; margin-left: 1px; width: 718px; background: #f5f5f5; border: 1px solid #444; display: flex; align-items: center; padding-left: 7px; flex: none; overflow: hidden; }
.vtab { position: relative; padding: 0 7px 0 2px; height: 11px; line-height: 11px; }
.vtab::after { content: ""; position: absolute; right: 2px; top: 0; bottom: 0; border-right: 1px solid #555; transform: skewX(25deg); }
.vtab.on { font-weight: 700; color: #222; }
.vtab.on::before { content: ""; position: absolute; left: -5px; top: 0; bottom: 0; border-left: 1px solid #555; transform: skewX(-25deg); }

/* bottom */
.bottom { display: flex; margin-top: 5px; gap: 5px; height: 175px; padding-left: 1px; }
.messages { width: 532px; flex: none; display: flex; flex-direction: column; }
.tabular { flex: 1; display: flex; flex-direction: column; }
.grid { height: 130px; background: #a0a0a0; flex: none; overflow: hidden; }
.mrow { height: 13px; display: grid; grid-template-columns: 38px 343px 151px; background: #fff; border-bottom: 1px solid #c8c8c8; }
.mrow span { padding: 0 2px; overflow: hidden; white-space: pre; line-height: 12px; border-right: 1px solid #bbb; }
.mrow.mh { background: #f0f0f0; }
.hscroll { height: 13px; background: #f2f2f2; display: flex; align-items: center; padding: 0 5px; flex: none; }
.hscroll.t { height: 15px; }
.hthumb { display: block; background: #cdcdcd; height: 13px; flex: none; }
.hthumb.mt { width: 369px; margin: 0 0 0 4px; }
.hthumb.tt { width: 97px; margin: 0 0 0 6px; }
.hscroll .rgt { margin-left: auto; }
.mtabs { height: 17px; display: flex; padding-left: 15px; background: #f5f5f5; align-items: center; }
.mtab { padding: 0 4px; height: 15px; display: flex; align-items: center; border-right: 1px solid #ccc; position: relative; }
.mtab.on { font-weight: 700; color: #222; background: #fbfbfb; border-right: 0; }
.mtab.on::before { content: ""; position: absolute; left: -8px; top: -2px; bottom: 0; border-left: 1px solid #bbb; transform: skewX(-38deg); }
.mtab + .mtab { margin-left: 4px; }
.tgrid { height: 145px; background: #a0a0a0; flex: none; }

/* status */
.status { height: 16px; background: #f0f0f0; display: flex; border-top: 1px solid #dcdcdc; flex: none; white-space: nowrap; }
.sc { display: flex; align-items: center; height: 14px; padding-left: 2px; border-left: 1px solid #c8c8c8; }
.c1 { width: 308px; border-left: 0; }
.c2 { width: 148px; }
.c3 { width: 124px; gap: 2px; }
.c3 .ic { width: 12px; height: 12px; margin-left: 1px; }
.c4 { width: 274px; }
.c5 { flex: 1; gap: 9px; }

/* taskbar */
.taskbar { height: 29px; background: #17191e; display: flex; align-items: center; flex: none; }
.start { width: 36px; display: flex; justify-content: center; }
.tw { width: 14px; height: 14px; display: block; }
.search { width: 254px; height: 29px; background: #f1f1f1; display: flex; align-items: center; padding-left: 7px; gap: 8px; color: #555; font-size: 11.200px; }
.tk { width: 36.800px; height: 29px; display: flex; align-items: center; justify-content: center; flex: none; }
.ring { display: block; width: 11px; height: 11px; border: 1.800px solid #e6e6e6; border-radius: 50%; }
.tb-ic { width: 18px; height: 18px; display: block; }
.run { box-shadow: inset 0 -2px 0 #79a9d6; }
.active { background: #3c3e42; }
.tray { margin-left: auto; display: flex; align-items: center; color: #d4d4d4; height: 29px; }
.caret { display: block; width: 7px; height: 7px; border-left: 1.100px solid #ddd; border-top: 1.100px solid #ddd; transform: rotate(45deg); margin: 4px 3px 0 0; }
.tr { width: 13px; height: 13px; display: block; margin-left: 5px; }
.clock { display: flex; flex-direction: column; align-items: center; width: 56px; margin-left: 1px; font-size: 9.200px; line-height: 14px; }
.notif { position: relative; width: 38px; padding-right: 8px; display: flex; justify-content: center; }
.nt { width: 17px; height: 17px; display: block; }
.notif em { position: absolute; left: 16px; top: 7px; font-style: normal; font-size: 7.500px; color: #eee; }
```
